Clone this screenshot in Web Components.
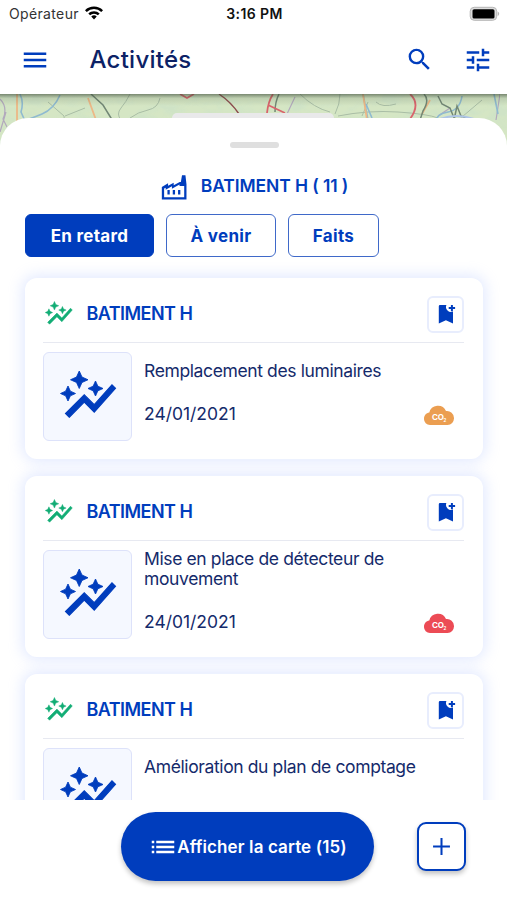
<!DOCTYPE html>
<html lang="fr">
<head>
<meta charset="utf-8">
<title>Activités</title>
<style>
  html, body { margin: 0; height: 100%; overflow: hidden; background: #fff; }
  body { font-family: Inter, "Liberation Sans", sans-serif; color: #0c2266; --blue: #003dbd; --ink: #142a6b; }
</style>
</head>
<body>
<activities-app></activities-app>
<script>
const define = (name, html, setup) => {
  const tpl = document.createElement('template');
  tpl.innerHTML = '<style>*{box-sizing:border-box}</style>' + html;
  customElements.define(name, class extends HTMLElement {
    connectedCallback() {
      if (this.shadowRoot) return;
      this.attachShadow({ mode: 'open' }).append(tpl.content.cloneNode(true));
      if (setup) setup(this, this.shadowRoot);
    }
  });
};

const ICONS = {
  menu: '<path d="M3 18h18v-2H3v2zm0-5h18v-2H3v2zm0-7v2h18V6H3z"/>',
  search: '<path d="M15.5 14h-.79l-.28-.27A6.471 6.471 0 0 0 16 9.5 6.5 6.5 0 1 0 9.5 16c1.61 0 3.09-.59 4.23-1.57l.27.28v.79l5 4.99L20.49 19l-4.99-5zm-6 0C7.01 14 5 11.99 5 9.5S7.01 5 9.5 5 14 7.01 14 9.5 11.99 14 9.5 14z"/>',
  tune: '<path d="M3 17v2h6v-2H3zM3 5v2h10V5H3zm10 16v-2h8v-2h-8v-2h-2v6h2zM7 9v2H3v2h4v2h2V9H7zm14 4v-2H11v2h10zm-6-4h2V7h4V5h-4V3h-2v6z"/>',
  list: '<path d="M3 13h2v-2H3v2zm0 4h2v-2H3v2zm0-8h2V7H3v2zm3.600 4H21v-2H6.600v2zm0 4H21v-2H6.600v2zm0-10v2H21V7H6.600z"/>',
  graph: '<path d="M14.06 9.94L12 9l2.060-.94L15 6l.94 2.060L18 9l-2.060.94L15 12zM4 14l.94-2.060L7 11l-2.060-.94L4 8l-.94 2.060L1 11l2.060.94zM8.500 9l1.090-2.410L12 5.500 9.590 4.410 8.500 2 7.410 4.410 5 5.500l2.410 1.090z" stroke="currentColor" stroke-width=".35"/><path d="M4.500 20.500l6-6.010 4 4L23 8.930l-1.410-1.410-7.090 7.970-4-4L3 19z" stroke="currentColor" stroke-width=".45"/>',
  factory: '<path fill-rule="evenodd" d="M.8 23.500V11.400l6-3.500v2.500l5.400-3v2.500l5.800-3.300h1.100L20.200.3h3.300l1 8.500v14.700zM3 21.400h19.300V10.600h-4.500V9.200l-7.300 4.100v-2.500l-6 3.300v-1.900L3 13zM6.200 14.400h2.200v4.400H6.200zM11.300 14.400h2.200v4.400h-2.200zM16.400 14.400h2.200v4.400h-2.200z"/>',
  bookmark: '<path d="M4.800 3h7.600a5 5 0 0 0 6.600 6.500V21.400L11.900 18.200 4.800 21.400V4.200Q4.800 3 6 3z"/><path d="M16.900 2.900h2v2.200h2.200v2h-2.200v2.200h-2V7.100h-2.200v-2h2.200z"/>',
  plus: '<path d="M19.500 12.900h-6.600v6.600h-1.800v-6.600H4.500v-1.800h6.600V4.500h1.800v6.600h6.600z"/>',
  wifi: '<path d="M12 19.800l3.300-3.500a4.900 4.900 0 0 0-6.600 0zM12 4.300C7.800 4.300 4 5.900 1.200 8.600l2.100 2.200a12.500 12.500 0 0 1 17.400 0l2.100-2.200A15.600 15.600 0 0 0 12 4.300zM12 9.800c-2.600 0-5 1-6.800 2.700l2.100 2.200a6.800 6.800 0 0 1 9.400 0l2.100-2.200A9.900 9.900 0 0 0 12 9.800z"/>'
};
define('ui-icon', `<style>:host{display:block;flex:none;line-height:0}svg{display:block;width:100%;height:100%;fill:currentColor}</style><svg></svg>`,
  (el, root) => {
    const s = root.querySelector('svg'), n = el.getAttribute('name');
    s.setAttribute('viewBox', n === 'factory' ? '0 0 25 24' : '0 0 24 24');
    s.innerHTML = ICONS[n];
  });

define('status-bar', `<style>
  :host{display:grid;grid-template-columns:1fr auto 1fr;align-items:center;height:27px;padding:0 7px 0 9px;color:#161616;font-size:14px;line-height:20px}
  .carrier{display:flex;align-items:center;gap:5px;letter-spacing:.35px;color:#333}
  ui-icon{width:20px;height:20px;color:#000;margin-top:-1px}
  .time{font-weight:600;font-size:14px;letter-spacing:.4px;color:#111}
  svg{justify-self:end;display:block}
</style>
<div class="carrier"><span>Opérateur</span><ui-icon name="wifi"></ui-icon></div>
<span class="time">3:16 PM</span>
<svg width="31" height="16" viewBox="0 0 31 16"><rect x="1.200" y="1.300" width="26.500" height="13" rx="4" fill="#ddd" stroke="#b5b5b5"/><rect x="3.500" y="3.200" width="22" height="9.300" rx="1.600"/><path d="M28.700 5.500q3 2.200 0 4.800z" fill="#b5b5b5"/></svg>`);

define('app-header', `<style>
  :host{display:flex;align-items:center;height:67px;padding:0 14px 2px 20px;color:var(--blue)}
  h1{margin:0 auto 0 39.500px;font-size:24px;line-height:30px;font-weight:500;color:#0c2266;letter-spacing:.25px}
  .menu,.tune{width:30px;height:30px}.search{width:29px;height:29px;margin-right:29.500px}
</style>
<ui-icon class="menu" name="menu"></ui-icon><h1><slot></slot></h1>
<ui-icon class="search" name="search"></ui-icon><ui-icon class="tune" name="tune"></ui-icon>`);

define('map-strip', `<style>:host{display:block;height:60px;overflow:hidden}svg{display:block}</style>
<svg width="507" height="60" viewBox="0 0 507 60" fill="none">
  <defs>
    <filter id="land" x="0" y="0" width="100%" height="100%"><feTurbulence type="fractalNoise" baseFrequency=".045 .09" numOctaves="3" seed="8"/><feColorMatrix values="0 0 0 0 .62  0 0 0 0 .77  0 0 0 0 .57  3.500 0 0 0 -1.500"/></filter>
    <filter id="soft" x="0" y="0" width="100%" height="100%"><feGaussianBlur stdDeviation=".5"/></filter>
    <linearGradient id="shade" x1="0" y1="0" x2="0" y2="1"><stop stop-color="#3b4a38" stop-opacity=".6"/><stop offset=".35" stop-color="#3b4a38" stop-opacity=".15"/><stop offset="1" stop-color="#3b4a38" stop-opacity="0"/></linearGradient>
  </defs>
  <rect width="507" height="60" fill="#d5e6c4"/>
  <rect width="507" height="60" filter="url(#land)" opacity=".75"/>
  <g filter="url(#soft)">
  <g stroke="#a9bda5" stroke-width="1"><path d="M48 8l16 14 1 12M65 22l20-8M130 0q-4 8-9 14t0 12M160 4q-2 10-12 12t-18 8M300 0q14 14 30 18M340 0q0 10-5 20M338 22q30-6 60-4t40 6M376 8q6 6 20 2M362 22l6-14M456 28l26-22"/></g>
  <g stroke="#b2a9bd" stroke-width="1.200"><path d="M0 5q8 8 3 20l4 8M6 18l-6 20M295 3l-8 17M450 14l-12 8M500 0l-4 26"/></g>
  <g stroke="#8fbad0" stroke-width="1.600"><path d="M20 0q4 8 1 18l4 9M60 1q-6 14-18 19T22 27M363 0l5 26M366 10l6 14M462 2q-2 14-14 16t-12 10M494 0l4 20"/></g>
  <g stroke="#edb886" stroke-width="1.800"><path d="M17 0v28M88 4l8 22M363 0l4 26M430 6l-8 14"/></g>
  <g stroke="#728775" stroke-width="1.500"><path d="M91 0l12 11 8 13-4 2M279 0q-4 8-4 18M424 0q6 6-1 17l-3 9M438 2l4 8 8 4 4 10M454 26l3-14 4 10 5 2"/></g>
  <g stroke="#d9646c" stroke-width="1.800"><path d="M180 0l7 4 7-4M273 0q-5 8-6 19M268 11l17 8M410 0q11 10 0 25"/></g>
  <path d="M219 0q12 8 20 20" stroke="#8c4b4d" stroke-width="1.500"/>
  <path d="M440 25q16-6 34 0" stroke="#aec5e7" stroke-width="2"/>
  </g>
  <rect width="507" height="12" fill="url(#shade)"/>
</svg>`);

define('filter-tab', `<style>
  :host{display:flex;align-items:center;justify-content:center;height:43px;border:1.500px solid #3f69c9;border-radius:6px;color:var(--blue);font-size:17px;font-weight:700;background:#fff;letter-spacing:.3px;padding-bottom:0}
  :host([active]){background:var(--blue);border-color:var(--blue);color:#fff}
</style><slot></slot>`);

define('co2-badge', `<style>
  :host{display:block;width:30px;height:20px}svg{display:block}
  text{font:700 8px Inter,sans-serif;fill:#fff}
</style>
<svg width="30" height="20" viewBox="0 0 30 20"><path fill="currentColor" d="M6 20a6 6 0 0 1-6-6.200C0 10.500 2.200 8 5.300 7.600A8.800 8.800 0 0 1 22 6.100a7 7 0 0 1 8 7A6.700 6.700 0 0 1 23.500 20z"/><text x="7.900" y="15.200">CO</text><text x="19.400" y="16.600" style="font-size:4.500px">2</text></svg>`);

define('activity-card', `<style>
  :host{display:block;flex:none;height:181px;padding:18px 19px 0 18px;border-radius:12px;background:#fff;box-shadow:0 0 14px 3px #dbe4ffc8}
  header{display:flex;align-items:center;height:47px;padding-bottom:9px;border-bottom:1.500px solid #e7e9f1}
  .kind{width:29.500px;height:29.500px;margin:-1px 0 0 1px;color:#12ad75}
  h2{margin:-1px auto 0 13px;font-size:18px;line-height:24px;font-weight:600;color:var(--blue);letter-spacing:-.55px}
  .save{display:grid;place-items:center;width:37px;height:37px;border:2px solid #e8edfd;border-radius:6px;color:var(--blue)}
  .save ui-icon{width:24px;height:24px;margin-top:-1px}
  .body{display:flex;gap:12px;padding-top:9px}
  .thumb{display:grid;place-items:center;flex:none;width:89px;height:88.500px;border:1.500px solid #dde2fa;border-radius:6px;background:#f5f8ff;color:var(--blue)}
  .thumb ui-icon{width:60px;height:60px}
  .info{flex:1;display:flex;flex-direction:column;padding-top:9px;color:var(--ink);font-size:17.500px;line-height:20px}
  .name{letter-spacing:-.38px;white-space:pre-line}
  .foot{display:flex;justify-content:space-between;padding:23px 10px 0 0}
  .foot span{letter-spacing:-.02px}
  co2-badge{margin-top:1px;color:var(--co2)}
  :host([tall]) .info{padding-top:0;margin-top:-1px}
</style>
<header><ui-icon class="kind" name="graph"></ui-icon><h2>BATIMENT H</h2><div class="save"><ui-icon name="bookmark"></ui-icon></div></header>
<div class="body"><div class="thumb"><ui-icon name="graph"></ui-icon></div>
<div class="info"><div class="name"><slot></slot></div><div class="foot"><span>24/01/2021</span><co2-badge></co2-badge></div></div></div>`);

define('bottom-bar', `<style>
  :host{display:flex;align-items:flex-start;height:100px;padding:12px 41px 0 121px;background:#fff;position:relative}
  .map{display:flex;align-items:center;justify-content:center;width:253px;height:69px;border-radius:35px;background:var(--blue);color:#fff;font-size:17px;font-weight:600;letter-spacing:.12px;box-shadow:0 3px 5px #0000003d;white-space:nowrap}
  .map ui-icon{width:30px;height:30px;margin-right:-1px}
  .add{display:grid;place-items:center;width:49px;height:49px;margin:10px 0 0 auto;border:2px solid var(--blue);border-radius:9px;background:#fff;color:var(--blue);box-shadow:0 3px 5px #0000003d}
  .add ui-icon{width:27px;height:27px}
</style>
<div class="map"><ui-icon name="list"></ui-icon><span>Afficher la carte (15)</span></div>
<div class="add"><ui-icon name="plus"></ui-icon></div>`);

define('activity-sheet', `<style>
  :host{display:flex;flex-direction:column;position:relative;flex:1;min-height:0;margin-top:-36px;border-radius:28px 28px 0 0;background:#fff}
  :host::before{content:"";position:absolute;left:172px;top:-5px;width:162px;height:5px;border-radius:10px 10px 0 0;background:#e9e9ea}
  .grip{flex:none;width:49px;height:6px;margin:24px 0 0 229.500px;border-radius:3px;background:#dfdfdf}
  .title{flex:none;display:flex;align-items:center;justify-content:center;gap:14px;height:26px;margin-top:26px;padding-left:2px;color:var(--blue);font-weight:600;font-size:17.500px}
  .title ui-icon{width:26px;height:25px;margin-top:1px}
  .title span{margin-top:-3px;letter-spacing:-.1px;white-space:pre}
  .tabs{flex:none;display:flex;gap:12px;padding:14px 25px 0}
  .list{flex:1;min-height:0;overflow:hidden;display:flex;flex-direction:column;gap:17px;padding:21px 24px 0 25px}
</style>
<div class="grip"></div>
<div class="title"><ui-icon name="factory"></ui-icon><span>BATIMENT H ( 11 )</span></div>
<div class="tabs"><filter-tab active style="width:129px">En retard</filter-tab><filter-tab style="width:110px">À venir</filter-tab><filter-tab style="width:91px">Faits</filter-tab></div>
<div class="list"><slot></slot></div>
<slot name="bottom"></slot>`);

define('activities-app', `<style>:host{display:flex;flex-direction:column;width:507px;height:900px;overflow:hidden;background:#fff}map-strip{flex:none}</style>
<status-bar></status-bar><app-header>Activités</app-header><map-strip></map-strip>
<activity-sheet>
  <activity-card style="--co2:#eb9e51">Remplacement des luminaires</activity-card>
  <activity-card tall style="--co2:#ec4b55">Mise en place de détecteur de
mouvement</activity-card>
  <activity-card style="--co2:#eb9e51">Amélioration du plan de comptage</activity-card>
  <bottom-bar slot="bottom"></bottom-bar>
</activity-sheet>`);
</script>
</body>
</html>
